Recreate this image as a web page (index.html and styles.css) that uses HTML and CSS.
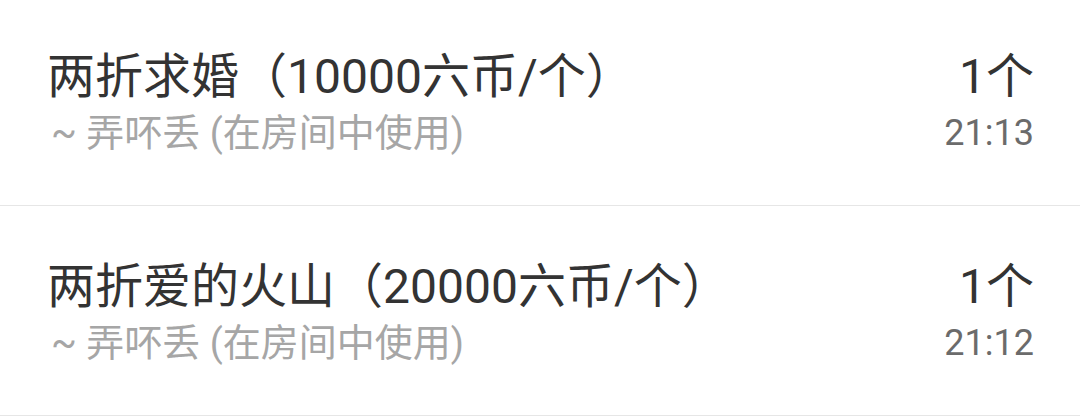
FILE: index.html
```html
<!DOCTYPE html>
<html lang="zh-CN">
<head>
<meta charset="utf-8">
<title>礼物记录</title>
<link rel="stylesheet" href="styles.css">
</head>
<body>
<ul class="gift-list">
  <li class="gift-row">
    <div class="gift-info">
      <div class="gift-name">两折求婚（10000六币/个）</div>
      <div class="gift-from">~ 弄吥丢 (在房间中使用)</div>
    </div>
    <div class="gift-meta">
      <div class="gift-count">1个</div>
      <div class="gift-time">21:13</div>
    </div>
  </li>
  <li class="gift-row">
    <div class="gift-info">
      <div class="gift-name">两折爱的火山（20000六币/个）</div>
      <div class="gift-from">~ 弄吥丢 (在房间中使用)</div>
    </div>
    <div class="gift-meta">
      <div class="gift-count">1个</div>
      <div class="gift-time">21:12</div>
    </div>
  </li>
</ul>
</body>
</html>
```
FILE: styles.css
```css
html, body {
  margin: 0;
  padding: 0;
  background: #ffffff;
}

body {
  font-family: Roboto, "Noto Sans CJK SC", sans-serif;
  overflow: hidden;
}

/* list is scrolled a few pixels, so the first row starts above the top edge */
.gift-list {
  list-style: none;
  margin: -4px 0 0 0;
  padding: 0;
}

.gift-row {
  display: flex;
  justify-content: space-between;
  align-items: center;
  height: 209px;
  padding: 0 46px 0 47px;
  border-bottom: 1px solid #e6e6e6;
  box-sizing: content-box;
}

.gift-info,
.gift-meta {
  display: flex;
  flex-direction: column;
  padding-top: 6px;
}

.gift-meta {
  align-items: flex-end;
}

.gift-name,
.gift-count {
  font-size: 48px;
  line-height: 60px;
  color: #333333;
}

.gift-from {
  font-size: 38px;
  line-height: 53px;
  color: #a6a6a6;
  padding-left: 4px;
}

.gift-time {
  font-size: 36px;
  line-height: 53px;
  color: #6b6b6b;
}
```
